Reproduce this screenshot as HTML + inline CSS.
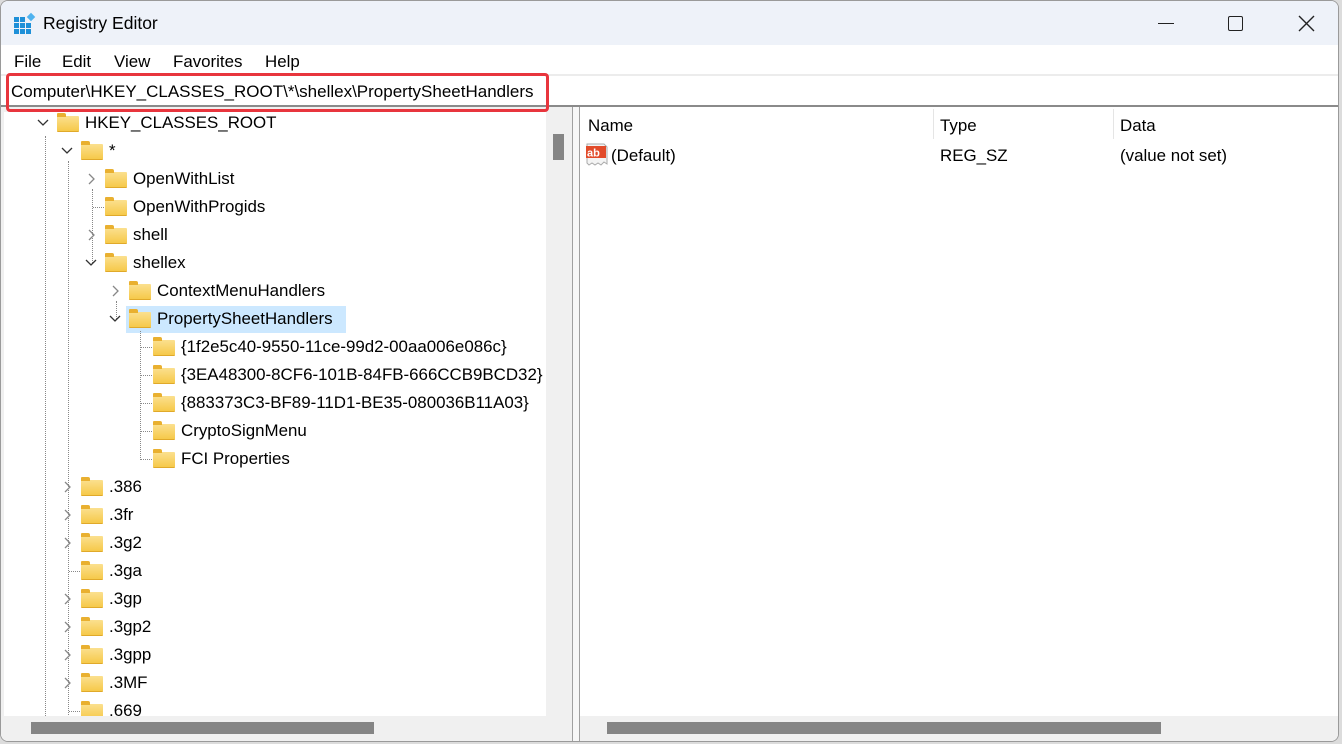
<!DOCTYPE html>
<html><head><meta charset="utf-8"><style>
*{margin:0;padding:0;box-sizing:border-box}
html,body{width:1342px;height:744px;overflow:hidden}
body{background:#dcdcdc;font-family:"Liberation Sans",sans-serif;font-size:16.9px;color:#000;position:relative}
.a{position:absolute}
.t{position:absolute;white-space:nowrap;line-height:20px}
.f{position:absolute;width:22px;height:16px;background:linear-gradient(#fbe08f,#f6c94a);border-radius:1px;border-bottom:1px solid #e0a92a}
.f:before{content:"";position:absolute;left:0;top:-3px;width:9px;height:4px;background:#e9b030;border-radius:1px 2px 0 0}
.dv{position:absolute;width:0;border-left:1px dotted #888}
.dh{position:absolute;height:0;border-top:1px dotted #888}
</style></head><body>
<div class="a" style="left:0;top:0;width:1339px;height:742px;background:#fff;border:1px solid #9a9a9a;border-radius:8px;overflow:hidden">
<div class="a" style="left:0;top:0;width:1339px;height:44px;background:#eef2f9"></div>
<svg class="a" style="left:12px;top:11px" width="24" height="24" viewBox="0 0 24 24">
<g fill="#1e90d8"><rect x="1" y="5" width="5" height="5"/><rect x="7" y="5" width="5" height="5"/><rect x="1" y="11" width="5" height="5"/><rect x="7" y="11" width="5" height="5"/><rect x="13" y="11" width="5" height="5"/><rect x="1" y="17" width="5" height="5"/><rect x="7" y="17" width="5" height="5"/><rect x="13" y="17" width="5" height="5"/></g>
<rect x="15" y="2" width="6" height="6" fill="#4fb3ef" transform="rotate(45 18 5)"/></svg>
<div class="t" style="left:42px;top:12px;font-size:17.5px">Registry Editor</div>
<div class="a" style="left:1157px;top:22px;width:16px;height:1px;background:#222"></div>
<div class="a" style="left:1227px;top:15px;width:15px;height:15px;border:1.5px solid #222;border-radius:2px"></div>
<svg class="a" style="left:1297px;top:14px" width="17" height="17"><path d="M1 1L16 16M16 1L1 16" stroke="#222" stroke-width="1.4"/></svg>
<div class="t" style="left:13px;top:51px">File</div>
<div class="t" style="left:61px;top:51px">Edit</div>
<div class="t" style="left:113px;top:51px">View</div>
<div class="t" style="left:172px;top:51px">Favorites</div>
<div class="t" style="left:264px;top:51px">Help</div>
<div class="a" style="left:0;top:73px;width:1339px;height:2px;background:#ececec"></div>
<div class="a" style="left:0;top:104px;width:1339px;height:2px;background:#8a8a8a"></div>
<div class="t" style="left:10px;top:81px;font-size:17px">Computer\HKEY_CLASSES_ROOT\*\shellex\PropertySheetHandlers</div>
<div class="a" style="left:0;top:106px;width:571px;height:636px;background:#f0f0f0"></div>
<div class="a" style="left:3px;top:111px;width:542px;height:604px;background:#fff;overflow:hidden">
<div style="position:absolute;left:-3px;top:-111px;width:600px;height:715px;overflow:hidden">
<div class="a" style="left:125px;top:305px;width:220px;height:27px;background:#cce8ff"></div>
<div class="dv" style="left:44px;top:135px;height:600px"></div>
<div class="dv" style="left:67px;top:160px;height:560px"></div>
<div class="dv" style="left:91px;top:188px;height:74px"></div>
<div class="dv" style="left:115px;top:300px;height:18px"></div>
<div class="dv" style="left:139px;top:330px;height:129px"></div>
<div class="dh" style="left:92px;top:206px;width:11px"></div>
<div class="dh" style="left:140px;top:346px;width:11px"></div>
<div class="dh" style="left:140px;top:374px;width:11px"></div>
<div class="dh" style="left:140px;top:402px;width:11px"></div>
<div class="dh" style="left:140px;top:430px;width:11px"></div>
<div class="dh" style="left:140px;top:458px;width:11px"></div>
<div class="dh" style="left:68px;top:570px;width:11px"></div>
<div class="dh" style="left:68px;top:710px;width:11px"></div>
<svg class="a" style="left:0;top:0" width="200" height="715" fill="none" stroke-width="1.3">
<g stroke="#333"><path d="M37 119l5 5 5-5M61 147l5 5 5-5M85 259l5 5 5-5M109 315l5 5 5-5"/></g>
<g stroke="#888"><path d="M88 173l5 5-5 5M88 229l5 5-5 5M112 285l5 5-5 5M64 481l5 5-5 5M64 509l5 5-5 5M64 537l5 5-5 5M64 593l5 5-5 5M64 621l5 5-5 5M64 649l5 5-5 5M64 677l5 5-5 5"/></g>
</svg>
<div class="f" style="left:56px;top:115px"></div><div class="t" style="left:84px;top:112px">HKEY_CLASSES_ROOT</div>
<div class="f" style="left:80px;top:143px"></div><div class="t" style="left:108px;top:140px">*</div>
<div class="f" style="left:104px;top:171px"></div><div class="t" style="left:132px;top:168px">OpenWithList</div>
<div class="f" style="left:104px;top:199px"></div><div class="t" style="left:132px;top:196px">OpenWithProgids</div>
<div class="f" style="left:104px;top:227px"></div><div class="t" style="left:132px;top:224px">shell</div>
<div class="f" style="left:104px;top:255px"></div><div class="t" style="left:132px;top:252px">shellex</div>
<div class="f" style="left:128px;top:283px"></div><div class="t" style="left:156px;top:280px">ContextMenuHandlers</div>
<div class="f" style="left:128px;top:311px"></div><div class="t" style="left:156px;top:308px">PropertySheetHandlers</div>
<div class="f" style="left:152px;top:339px"></div><div class="t" style="left:180px;top:336px">{1f2e5c40-9550-11ce-99d2-00aa006e086c}</div>
<div class="f" style="left:152px;top:367px"></div><div class="t" style="left:180px;top:364px">{3EA48300-8CF6-101B-84FB-666CCB9BCD32}</div>
<div class="f" style="left:152px;top:395px"></div><div class="t" style="left:180px;top:392px">{883373C3-BF89-11D1-BE35-080036B11A03}</div>
<div class="f" style="left:152px;top:423px"></div><div class="t" style="left:180px;top:420px">CryptoSignMenu</div>
<div class="f" style="left:152px;top:451px"></div><div class="t" style="left:180px;top:448px">FCI Properties</div>
<div class="f" style="left:80px;top:479px"></div><div class="t" style="left:108px;top:476px">.386</div>
<div class="f" style="left:80px;top:507px"></div><div class="t" style="left:108px;top:504px">.3fr</div>
<div class="f" style="left:80px;top:535px"></div><div class="t" style="left:108px;top:532px">.3g2</div>
<div class="f" style="left:80px;top:563px"></div><div class="t" style="left:108px;top:560px">.3ga</div>
<div class="f" style="left:80px;top:591px"></div><div class="t" style="left:108px;top:588px">.3gp</div>
<div class="f" style="left:80px;top:619px"></div><div class="t" style="left:108px;top:616px">.3gp2</div>
<div class="f" style="left:80px;top:647px"></div><div class="t" style="left:108px;top:644px">.3gpp</div>
<div class="f" style="left:80px;top:675px"></div><div class="t" style="left:108px;top:672px">.3MF</div>
<div class="f" style="left:80px;top:703px"></div><div class="t" style="left:108px;top:700px">.669</div>
</div></div>
<div class="a" style="left:552px;top:133px;width:11px;height:26px;background:#858585"></div>
<div class="a" style="left:30px;top:721px;width:343px;height:12px;background:#858585"></div>
<div class="a" style="left:571px;top:106px;width:1px;height:636px;background:#a0a0a0"></div>
<div class="a" style="left:572px;top:106px;width:6px;height:636px;background:#f7f7f7"></div>
<div class="a" style="left:578px;top:106px;width:1px;height:636px;background:#a0a0a0"></div>
<div class="a" style="left:579px;top:715px;width:760px;height:27px;background:#f0f0f0"></div>
<div class="a" style="left:606px;top:721px;width:554px;height:12px;background:#858585"></div>
<div class="a" style="left:932px;top:108px;width:1px;height:30px;background:#e5e5e5"></div>
<div class="a" style="left:1112px;top:108px;width:1px;height:30px;background:#e5e5e5"></div>
<div class="t" style="left:587px;top:115px">Name</div>
<div class="t" style="left:939px;top:115px">Type</div>
<div class="t" style="left:1119px;top:115px">Data</div>
<svg class="a" style="left:584px;top:142px" width="24" height="24" viewBox="0 0 24 24">
<path d="M2 1h17l3 3v17l-3-2-3 3-3-2-3 2-3-2-3 2-2-2z" fill="#f4f4f4" stroke="#aaa"/>
<rect x="1" y="3" width="20" height="12" fill="#e24b2a"/>
<text x="2" y="13.5" font-family="Liberation Sans" font-weight="bold" font-size="11" fill="#fff">ab</text></svg>
<div class="t" style="left:610px;top:145px">(Default)</div>
<div class="t" style="left:939px;top:145px">REG_SZ</div>
<div class="t" style="left:1119px;top:145px">(value not set)</div>
<div class="a" style="left:5px;top:72px;width:543px;height:39px;border:3px solid #e8353d;border-radius:4px"></div>
</div>
</body></html>
